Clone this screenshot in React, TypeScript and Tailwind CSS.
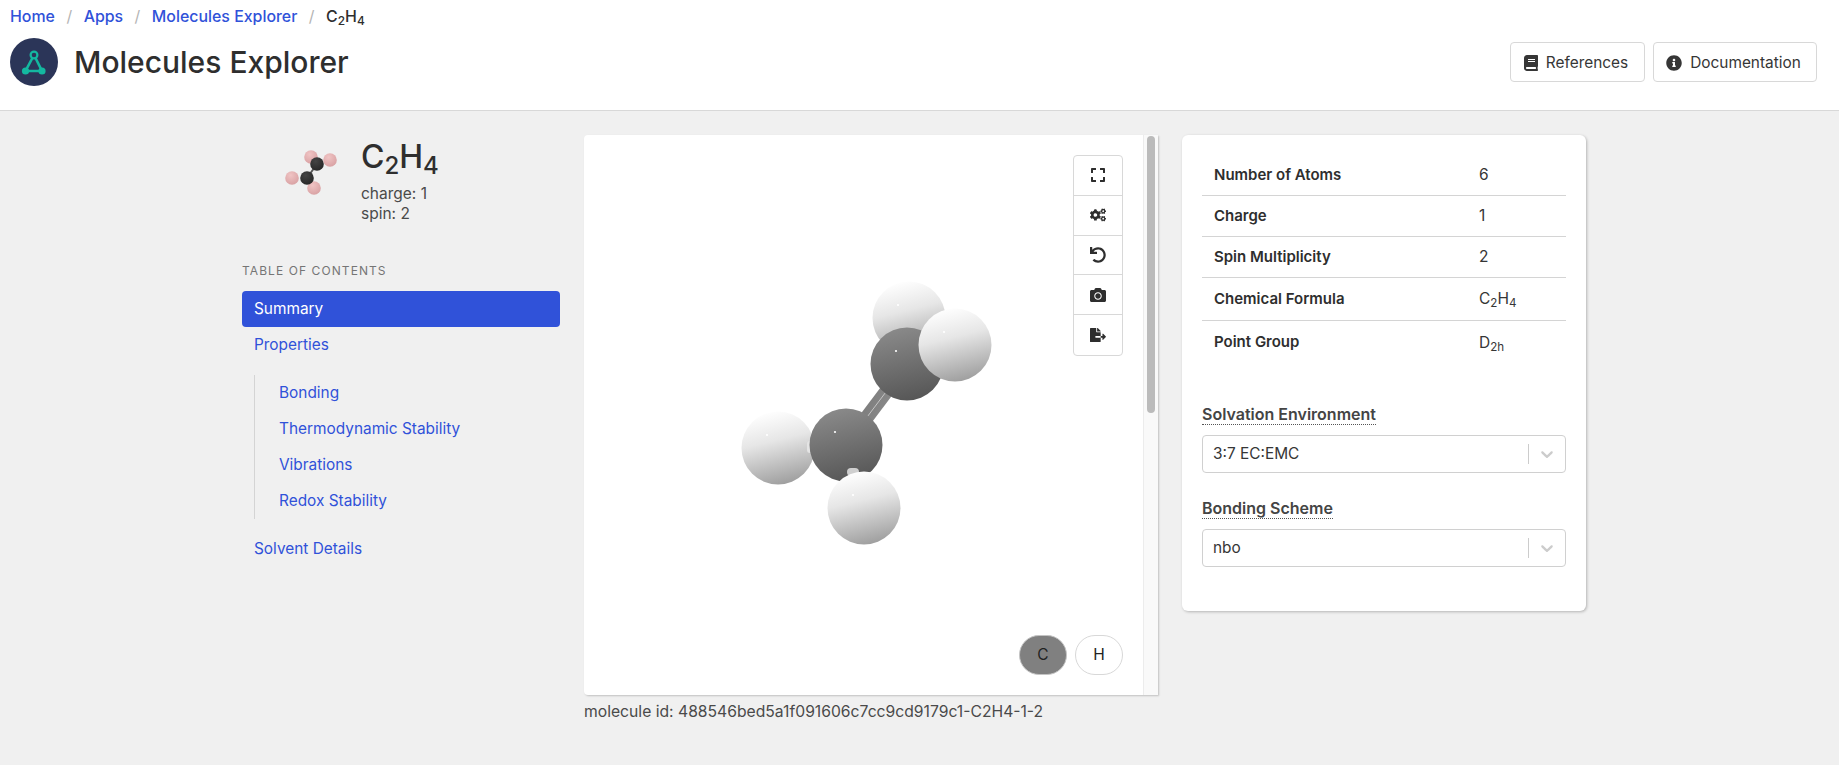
import React from 'react';
import { FaBook, FaInfoCircle, FaExpand, FaCogs, FaUndo, FaCamera, FaFileExport } from 'react-icons/fa';

const Formula: React.FC = () => (
  <>
    C<sub>2</sub>H<sub>4</sub>
  </>
);

const LogoMark: React.FC = () => (
  <svg viewBox="0 0 48 48" className="w-12 h-12 shrink-0">
    <circle cx="24" cy="24" r="24" fill="#2b3558" />
    <path d="M24 17 L15.5 33 L32 33 Z" fill="none" stroke="#14b8a0" strokeWidth="2.6" />
    <circle cx="24" cy="17" r="3.4" fill="#2b3558" stroke="#14b8a0" strokeWidth="2.2" />
    <circle cx="15.5" cy="33" r="3.6" fill="#14b8a0" />
    <circle cx="32" cy="33" r="3.6" fill="#14b8a0" />
  </svg>
);

const Thumbnail: React.FC = () => (
  <svg viewBox="0 0 60 50" className="w-[60px] h-[50px]">
    <defs>
      <radialGradient id="thumbH" cx="40%" cy="30%" r="75%">
        <stop offset="0%" stopColor="#f0c4c4" />
        <stop offset="100%" stopColor="#d8a0a2" />
      </radialGradient>
      <radialGradient id="thumbC" cx="40%" cy="30%" r="75%">
        <stop offset="0%" stopColor="#444444" />
        <stop offset="100%" stopColor="#262626" />
      </radialGradient>
    </defs>
    <circle cx="31" cy="8" r="6.8" fill="url(#thumbH)" />
    <line x1="27" y1="29" x2="37" y2="15" stroke="#555555" strokeWidth="2" />
    <circle cx="12" cy="29" r="6.8" fill="url(#thumbH)" />
    <circle cx="34" cy="39" r="6.8" fill="url(#thumbH)" />
    <circle cx="27" cy="29" r="6.8" fill="url(#thumbC)" />
    <circle cx="50" cy="11" r="6.8" fill="url(#thumbH)" />
    <circle cx="37" cy="15" r="6.8" fill="url(#thumbC)" />
  </svg>
);

const Atom: React.FC<{ x: number; y: number; fill: string }> = ({ x, y, fill }) => (
  <>
    <circle cx={x} cy={y} r="36.5" fill={`url(#${fill})`} />
    <circle cx={x - 11} cy={y - 13} r="1.1" fill="#ffffff" />
  </>
);

const MoleculeView: React.FC = () => (
  <svg viewBox="0 0 300 300" className="w-[300px] h-[300px]">
    <defs>
      <linearGradient id="atomH" x1="0.35" y1="0" x2="0.6" y2="1">
        <stop offset="0%" stopColor="#ffffff" />
        <stop offset="40%" stopColor="#e6e6e6" />
        <stop offset="100%" stopColor="#9e9e9e" />
      </linearGradient>
      <linearGradient id="atomC" x1="0.35" y1="0" x2="0.6" y2="1">
        <stop offset="0%" stopColor="#8a8a8a" />
        <stop offset="100%" stopColor="#565656" />
      </linearGradient>
      <linearGradient id="bond" x1="0" y1="0" x2="1" y2="0.5">
        <stop offset="0%" stopColor="#6f6f6f" />
        <stop offset="100%" stopColor="#909090" />
      </linearGradient>
    </defs>
    <Atom x={189} y={58} fill="atomH" />
    <line x1="126" y1="185" x2="187" y2="104" stroke="url(#bond)" strokeWidth="14" />
    <line x1="126" y1="185" x2="187" y2="104" stroke="#e0e0e0" strokeWidth="0.7" />
    <Atom x={58} y={188} fill="atomH" />
    <rect x="87" y="181" width="6" height="12" rx="3" fill="#e4e4e4" />
    <Atom x={126} y={185} fill="atomC" />
    <rect x="127" y="208" width="12" height="8" rx="4" fill="#cfcfcf" />
    <Atom x={144} y={248} fill="atomH" />
    <Atom x={187} y={104} fill="atomC" />
    <Atom x={235} y={85} fill="atomH" />
  </svg>
);

const TableRow: React.FC<{ label: string; last?: boolean; tall?: boolean; children: React.ReactNode }> = ({
  label,
  last,
  tall,
  children,
}) => (
  <div className={`flex items-center ${tall ? 'h-[43px]' : 'h-[41px]'} ${last ? '' : 'border-b border-[#d4d4d4]'}`}>
    <div className="w-[277px] pl-3 font-semibold text-[#2e2e2e]">{label}</div>
    <div className="text-[15.5px] text-[#363636]">{children}</div>
  </div>
);

const SelectBox: React.FC<{ label: string; value: string; className?: string }> = ({ label, value, className }) => (
  <div className={className}>
    <div className="h-[22px] leading-[22px]">
      <span className="inline-block text-base font-semibold text-[#444444] leading-[19px] border-b border-dotted border-[#555555]">
        {label}
      </span>
    </div>
    <div className="mt-[9px] h-[38px] flex items-center bg-white border border-[#d0d0d0] rounded pl-[10px] text-[15.4px] text-[#363636]">
      <span className="flex-1">{value}</span>
      <span className="w-px h-5 bg-[#cccccc]" />
      <span className="w-[36px] flex justify-center">
        <svg viewBox="0 0 20 20" className="w-5 h-5" fill="#cccccc">
          <path d="M4.516 7.548c.436-.446 1.043-.481 1.576 0L10 11.295l3.908-3.747c.533-.481 1.141-.446 1.574 0 .436.445.408 1.197 0 1.615-.406.418-4.695 4.502-4.695 4.502a1.095 1.095 0 0 1-1.576 0S4.924 9.581 4.516 9.163c-.409-.418-.436-1.17 0-1.615z" />
        </svg>
      </span>
    </div>
  </div>
);

const toolbarIcons = [FaExpand, FaCogs, FaUndo, FaCamera, FaFileExport];

const App: React.FC = () => {
  return (
    <div className="min-h-screen bg-[#f0f0f0] text-[15px] text-[#363636] antialiased font-['Inter','Noto_Sans',sans-serif]">
      <header className="h-[111px] bg-white border-b border-[#d8d8d8] pl-[10px] pr-[22px] flex flex-col">
        <nav className="h-[34px] flex items-center text-[15.9px] font-medium text-[#3052d9]">
          <a>Home</a>
          <span className="mx-[11.5px] text-[#b5b5b5] font-normal">/</span>
          <a>Apps</a>
          <span className="mx-[11.5px] text-[#b5b5b5] font-normal">/</span>
          <a>Molecules Explorer</a>
          <span className="mx-[11.5px] text-[#b5b5b5] font-normal">/</span>
          <span className="text-[#2e2e2e]">
            <Formula />
          </span>
        </nav>
        <div className="mt-1 flex items-center justify-between">
          <div className="flex items-center gap-4">
            <LogoMark />
            <h1 className="text-[30px] font-medium text-[#2e2e2e]">Molecules Explorer</h1>
          </div>
          <div className="flex gap-2 text-[15.4px]">
            <button className="h-10 w-[135px] pr-[3px] pt-px flex items-center justify-center gap-2 bg-white border border-[#d8d8d8] rounded text-[#363636]">
              <FaBook className="w-[14px] h-4" />
              References
            </button>
            <button className="h-10 w-[164px] pr-[3px] pt-px flex items-center justify-center gap-2 bg-white border border-[#d8d8d8] rounded text-[#363636]">
              <FaInfoCircle className="w-4 h-4" />
              Documentation
            </button>
          </div>
        </div>
      </header>

      <main className="pl-[242px] pt-6 flex items-start">
        <aside className="w-[318px] mr-6 text-[15.4px]">
          <div className="h-[135px] flex items-start">
            <div className="w-[119px] pl-[38px] pt-[14px]">
              <Thumbnail />
            </div>
            <div>
              <div className="text-[32px] leading-[44px] font-medium text-[#2e2e2e]">
                <Formula />
              </div>
              <div className="mt-[5px] leading-5 text-[15.5px] text-[#4a4a4a]">charge: 1</div>
              <div className="leading-5 text-[15.5px] text-[#4a4a4a]">spin: 2</div>
            </div>
          </div>
          <div className="text-xs tracking-[0.09em] uppercase text-[#757575] leading-4 mt-[-7px]">Table of contents</div>
          <ul className="mt-[12px] text-[#3052d9]">
            <li className="h-9 flex items-center px-3 bg-[#3052d9] text-white rounded">Summary</li>
            <li className="h-9 flex items-center px-3">Properties</li>
            <li className="ml-3 mt-[12px] border-l border-[#d4d4d4] pl-6">
              <ul>
                <li className="h-9 flex items-center">Bonding</li>
                <li className="h-9 flex items-center">Thermodynamic Stability</li>
                <li className="h-9 flex items-center">Vibrations</li>
                <li className="h-9 flex items-center">Redox Stability</li>
              </ul>
            </li>
            <li className="h-9 mt-3 flex items-center px-3">Solvent Details</li>
          </ul>
        </aside>

        <section className="w-[574px] mr-6">
          <div className="relative h-[560px] bg-white rounded-l shadow-[1px_1px_2px_rgba(0,0,0,0.2)] flex">
            <div className="flex-1 flex items-center justify-center pl-[13px] pb-[10px]">
              <MoleculeView />
            </div>
            <div className="w-[15px] bg-[#f9f9f9] border-l border-[#ececec] pt-[1px] pl-[3px]">
              <div className="w-2 h-[277px] bg-[#bbbbbb] rounded-full" />
            </div>
            <div className="absolute left-[489px] top-5 w-[50px] bg-white border border-[#d8d8d8] rounded divide-y divide-[#d8d8d8]">
              {toolbarIcons.map((Icon, i) => (
                <div key={i} className="h-[39.8px] flex items-center justify-center text-[#2e2e2e]">
                  <Icon className="w-4 h-4" />
                </div>
              ))}
            </div>
            <div className="absolute left-[435px] top-[500px] flex gap-2 text-[15.5px] text-[#222222]">
              <div className="w-12 h-10 rounded-[20px] bg-[#808080] border border-[#c4c4c4] flex items-center justify-center">C</div>
              <div className="w-12 h-10 rounded-[20px] bg-white border border-[#d8d8d8] flex items-center justify-center">H</div>
            </div>
          </div>
          <div className="mt-[7px] leading-5 text-[15.7px] text-[#4a4a4a]">molecule id: 488546bed5a1f091606c7cc9cd9179c1-C2H4-1-2</div>
        </section>

        <section className="w-[404px] h-[476px] bg-white rounded-md shadow-[1px_1px_3px_rgba(0,0,0,0.25)] px-5 pt-5">
          <div>
            <TableRow label="Number of Atoms">6</TableRow>
            <TableRow label="Charge">1</TableRow>
            <TableRow label="Spin Multiplicity">2</TableRow>
            <TableRow label="Chemical Formula" tall>
              <Formula />
            </TableRow>
            <TableRow label="Point Group" last tall>
              D<sub>2h</sub>
            </TableRow>
          </div>
          <SelectBox label="Solvation Environment" value="3:7 EC:EMC" className="mt-[40px]" />
          <SelectBox label="Bonding Scheme" value="nbo" className="mt-[25px]" />
        </section>
      </main>
    </div>
  );
};

export default App;
